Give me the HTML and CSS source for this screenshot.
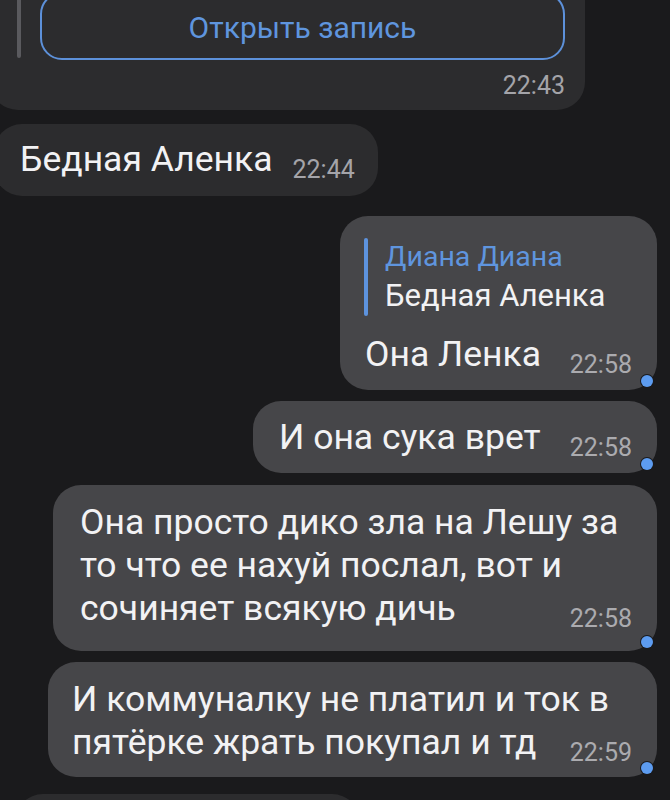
FILE: index.html
```html
<!DOCTYPE html>
<html lang="ru">
<head>
<meta charset="utf-8">
<link rel="stylesheet" href="styles.css">
</head>
<body>
<div class="chat">
  <div class="msg in first">
    <div class="repost">
      <div class="bar"></div>
      <div class="btn">Открыть запись</div>
    </div>
    <div class="meta-row"><span class="time">22:43</span></div>
  </div>

  <div class="msg in m2">
    <div class="row"><span class="txt">Бедная Аленка</span><span class="time">22:44</span></div>
  </div>

  <div class="msg out m3">
    <div class="quote">
      <div class="qbar"></div>
      <div class="qbody">
        <div class="qname">Диана Диана</div>
        <div class="qtext">Бедная Аленка</div>
      </div>
    </div>
    <div class="row"><span class="txt">Она Ленка</span><span class="time">22:58</span></div>
    <span class="dot"></span>
  </div>

  <div class="msg out m4">
    <div class="row"><span class="txt">И она сука врет</span><span class="time">22:58</span></div>
    <span class="dot"></span>
  </div>

  <div class="msg out m5">
    <div class="line">Она просто дико зла на Лешу за</div>
    <div class="line">то что ее нахуй послал, вот и</div>
    <div class="row"><span class="txt">сочиняет всякую дичь</span><span class="time">22:58</span></div>
    <span class="dot"></span>
  </div>

  <div class="msg out m6">
    <div class="line">И коммуналку не платил и ток в</div>
    <div class="row"><span class="txt">пятёрке жрать покупал и тд</span><span class="time">22:59</span></div>
    <span class="dot"></span>
  </div>

  <div class="msg in m7">
    <div class="row"><span class="txt">&nbsp;</span></div>
  </div>
</div>
</body>
</html>
```
FILE: styles.css
```css
html, body {
  margin: 0;
  padding: 0;
  background: #1a1a1c;
  height: 800px;
  overflow: hidden;
}
body {
  font-family: Roboto, "Liberation Sans", sans-serif;
  color: #f2f2f4;
}
.chat {
  display: flex;
  flex-direction: column;
  align-items: flex-start;
}
.msg {
  position: relative;
  box-sizing: border-box;
  border-radius: 28px;
  font-size: 35.5px;
  line-height: 43px;
}
.in { background: #2c2c2e; }
.out {
  background: #464649;
  align-self: flex-end;
  margin-right: 13px;
}
.row {
  display: flex;
  align-items: flex-end;
  justify-content: space-between;
  gap: 20px;
}
.line, .txt { white-space: nowrap; }
.time {
  font-size: 25px;
  line-height: 22px;
  color: #a4a4a9;
  white-space: nowrap;
}
.out .time { color: #ababaf; }
.dot {
  position: absolute;
  right: 4px;
  bottom: 3px;
  width: 12px;
  height: 12px;
  border-radius: 50%;
  background: #5d9cf0;
  box-shadow: 0 0 0 1px #1a1a1c;
}

/* first (repost) bubble */
.first {
  margin-top: -30px;
  margin-left: -10px;
  width: 595px;
  padding: 22px 20px 13px 27px;
}
.repost {
  display: flex;
  gap: 19px;
}
.bar {
  width: 4px;
  border-radius: 2px;
  background: #5a5a5e;
  margin-bottom: 2px;
}
.btn {
  flex: 1;
  box-sizing: border-box;
  height: 68px;
  border: 2px solid #5d91da;
  border-radius: 22px;
  color: #5f95de;
  font-size: 30px;
  line-height: 68px;
  text-align: center;
}
.meta-row {
  display: flex;
  justify-content: flex-end;
  margin-top: 15px;
}

.m2 {
  margin-top: 14px;
  margin-left: -6px;
  width: 384px;
  padding: 14px 26px 15px 26px;
}
.m3 {
  margin-top: 20px;
  width: 317px;
  padding: 22px 25px 14px 24px;
}
.quote {
  display: flex;
  gap: 17px;
  margin-bottom: 17px;
}
.qbar {
  width: 4px;
  border-radius: 2px;
  background: #5d93de;
}
.qname {
  color: #5f95de;
  font-size: 28.5px;
  line-height: 38px;
}
.qtext {
  font-size: 31px;
  line-height: 40px;
}
.m3 .row { padding-left: 1px; }
.m4 {
  margin-top: 11px;
  width: 404px;
  padding: 15px 25px 14px 26px;
}
.m5 {
  margin-top: 12px;
  width: 604px;
  padding: 16px 25px 21px 27px;
}
.m6 {
  margin-top: 11px;
  width: 609px;
  padding: 16px 25px 13px 24px;
}
.m7 {
  margin-top: 17px;
  margin-left: 15px;
  width: 345px;
  padding: 14px 26px;
}
```
